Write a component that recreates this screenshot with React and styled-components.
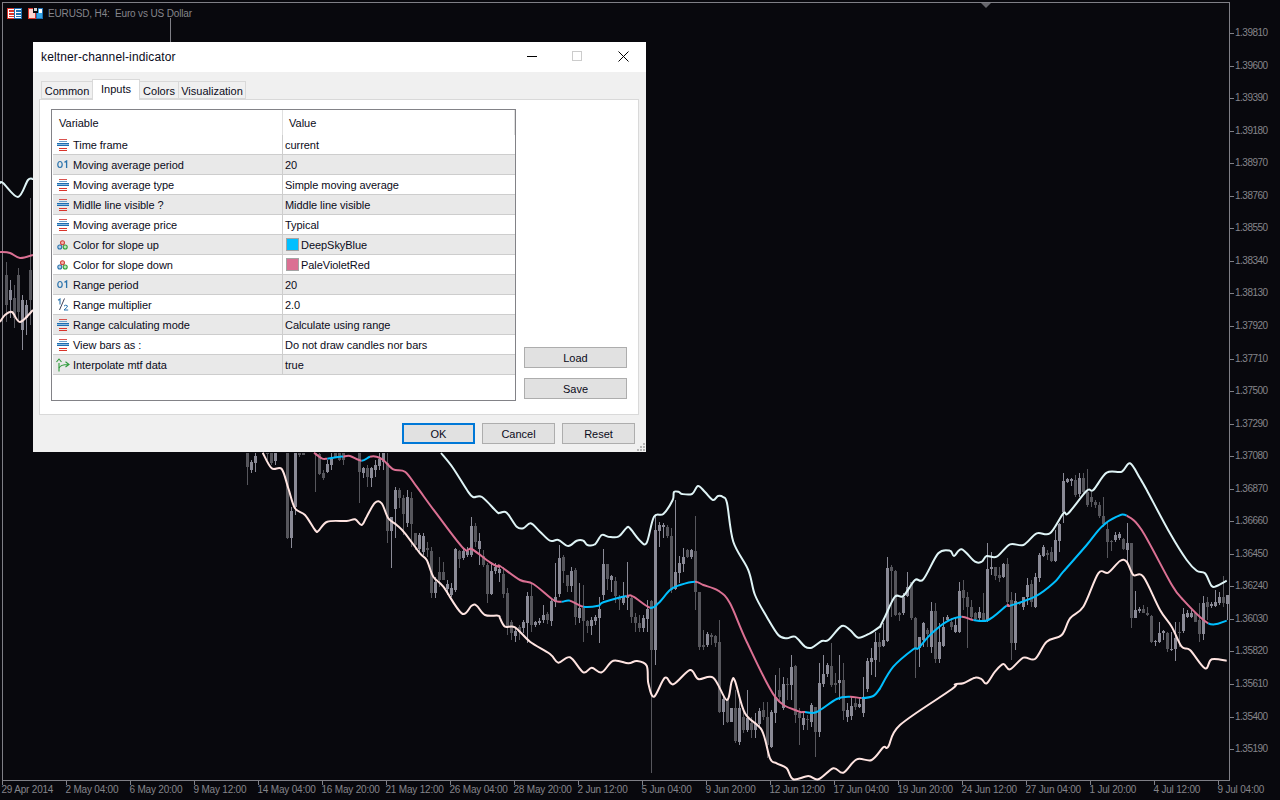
import React from "react";
import styled, { createGlobalStyle } from "styled-components";

const GlobalStyle = createGlobalStyle`
  * { box-sizing: border-box; }
  html, body { margin: 0; padding: 0; background: #08080d; }
  body { font-family: "Liberation Sans", sans-serif; overflow: hidden; }
`;

const zoom = (ox, oy, pts) => pts.map(([x, y]) => [ox + x / 3, oy + y / 3]);
const Z9 = (pts) => zoom(240, 450, pts);
const Z11 = (pts) => zoom(500, 500, pts);
const Z12 = (pts) => zoom(880, 450, pts);

const upperLine = [
  [441, 453], [453, 468], [467, 490], [473, 497], [482, 497], [497, 512],
  ...Z11([[0, 38], [20, 38], [50, 80], [70, 85], [92, 70], [120, 95], [150, 122], [175, 120], [205, 138], [230, 122], [250, 122], [262, 135], [285, 133], [305, 105], [325, 110], [355, 110], [380, 83], [390, 85], [420, 122], [440, 128], [462, 50], [490, 42], [518, 0]]),
  [674, 492], [679, 492], [682, 494], [692, 494], [698, 486], [705, 492], [713, 500], [718, 496], [723, 497], [727, 503],
  ...Z11([[700, 125], [745, 210], [765, 285], [800, 350], [835, 405], [860, 415], [885, 410], [915, 440], [935, 443], [965, 423], [985, 420], [1025, 378], [1050, 390], [1075, 413], [1110, 400], [1140, 380]]),
  ...Z12([[0, 530], [15, 500], [45, 440], [70, 438], [105, 390], [130, 388], [175, 310], [210, 302], [222, 318], [245, 298], [285, 335], [305, 335], [320, 318], [350, 320], [390, 283], [430, 285], [470, 250], [510, 250], [550, 190], [565, 190], [620, 122], [640, 120], [680, 68], [725, 65], [750, 40], [780, 85], [800, 120], [870, 250], [920, 330], [950, 362], [975, 370], [995, 408], [1010, 408], [1040, 392]]),
];

const lowerLine = [
  ...Z9([[68, 8], [95, 55], [125, 57], [145, 115], [165, 175], [195, 195], [225, 240], [235, 243], [262, 215], [320, 213], [345, 208], [365, 225], [380, 200], [405, 158], [425, 160], [445, 205], [470, 225], [495, 250], [540, 310], [560, 330], [580, 380], [610, 410], [665, 490], [695, 467], [710, 467], [735, 495], [775, 497]]),
  ...Z11([[0, 355], [15, 380], [45, 382], [90, 425], [150, 462], [175, 488], [210, 472], [250, 517], [275, 503], [305, 517], [340, 482], [385, 490], [410, 483], [440, 497], [445, 550], [462, 590], [495, 533], [520, 553], [570, 510], [595, 537], [640, 533], [680, 600], [695, 545], [705, 543], [735, 640], [785, 690], [810, 775], [830, 790], [860, 805], [880, 838], [925, 828], [955, 838], [1000, 805], [1030, 818], [1070, 778], [1115, 780], [1150, 742], [1165, 740], [1200, 675]]),
  ...Z12([[215, 718], [225, 703], [250, 700], [285, 683], [305, 688], [320, 700], [345, 665], [370, 642], [390, 658], [430, 623], [465, 627], [500, 575], [545, 555], [570, 505], [610, 470], [655, 370], [685, 368], [720, 333], [740, 335], [760, 375], [790, 380], [840, 480], [875, 530], [905, 590], [930, 600], [975, 655], [995, 628], [1040, 632]]),
];

const BLUE = "#00bfff";
const PINK = "#db7093";
const middleLine = [
  [PINK, Z9([[222, 8], [245, 25]])],
  [BLUE, Z9([[262, 26], [300, 20]])],
  [PINK, Z9([[310, 20], [330, 18]])],
  [BLUE, Z9([[365, 32]])],
  [PINK, [...Z9([[390, 20], [410, 20], [430, 30], [460, 58], [495, 65], [530, 110], [585, 185], [670, 295], [695, 297], [750, 337], [775, 350]]), ...Z11([[0, 198], [60, 240], [100, 252], [160, 300]])]],
  [BLUE, Z11([[185, 305]])],
  [PINK, Z11([[210, 302]])],
  [BLUE, Z11([[250, 320], [295, 317], [310, 307]])],
  [PINK, Z11([[380, 288], [400, 290]])],
  [BLUE, Z11([[450, 323], [475, 310], [510, 270], [540, 255]])],
  [PINK, Z11([[585, 245], [610, 255], [655, 272], [690, 310], [740, 425], [825, 590], [890, 632]])],
  [BLUE, Z11([[915, 636], [950, 636], [1010, 597]])],
  [PINK, Z11([[1050, 590]])],
  [BLUE, [...Z11([[1085, 594], [1120, 588], [1140, 565]]), ...Z12([[0, 715], [40, 650], [100, 598], [115, 595], [150, 555], [200, 515]])]],
  [PINK, Z12([[245, 500]])],
  [BLUE, Z12([[280, 510], [325, 510]])],
  [PINK, Z12([[380, 467]])],
  [BLUE, Z12([[390, 467], [465, 440], [520, 400], [550, 365], [620, 285], [665, 230], [710, 200]])],
  [PINK, Z12([[740, 197], [785, 240], [870, 395], [905, 445]])],
  [BLUE, Z12([[985, 520], [1040, 512]])],
];

// x, high, body top, body bottom, low, light
const candlesZ9 = [
  [20, 8, 10, 50, 105, 0], [32, 30, 35, 60, 68, 1], [44, 10, 18, 38, 65, 1], [80, 8, 8, 12, 30, 0], [92, 8, 8, 38, 45, 0], [104, 8, 8, 32, 45, 1],
  [140, 8, 8, 265, 268, 0], [152, 170, 183, 263, 293, 1], [164, 8, 8, 170, 195, 1], [176, 8, 8, 15, 20, 0], [188, 8, 8, 15, 15, 0],
  [224, 8, 8, 10, 125, 0], [236, 10, 12, 72, 75, 0], [248, 60, 70, 85, 90, 0], [260, 30, 42, 65, 70, 1], [272, 10, 28, 45, 60, 1], [284, 8, 8, 25, 25, 0], [296, 8, 8, 30, 32, 0], [308, 8, 8, 30, 45, 0],
  [356, 8, 8, 65, 158, 0], [368, 50, 55, 68, 85, 1], [380, 45, 55, 80, 112, 0], [392, 50, 55, 85, 110, 1], [404, 30, 45, 60, 80, 1], [416, 10, 28, 48, 60, 1], [428, 8, 8, 35, 60, 1],
  [440, 8, 38, 242, 278, 0], [452, 200, 202, 242, 355, 1], [464, 112, 120, 178, 265, 1], [476, 115, 120, 145, 175, 0], [488, 135, 145, 192, 255, 0], [500, 120, 142, 218, 230, 1], [512, 125, 145, 222, 290, 0],
  [524, 250, 250, 285, 300, 0], [536, 250, 255, 298, 305, 1], [548, 250, 258, 305, 315, 1], [560, 275, 295, 300, 320, 0], [572, 290, 303, 430, 445, 0], [584, 380, 395, 430, 445, 1], [596, 320, 365, 390, 410, 0], [608, 335, 365, 390, 390, 0],
  [620, 390, 403, 418, 435, 1], [632, 400, 415, 435, 440, 1], [644, 295, 297, 420, 425, 1], [656, 300, 302, 327, 355, 0], [668, 295, 303, 325, 330, 1], [680, 290, 302, 315, 320, 1], [692, 200, 228, 315, 320, 1], [704, 220, 228, 275, 290, 0],
  [716, 250, 272, 298, 345, 1], [728, 300, 318, 345, 350, 0], [740, 340, 345, 432, 460, 0], [752, 335, 362, 432, 435, 1], [764, 340, 352, 362, 372, 1], [776, 345, 358, 370, 395, 1],
];

const candlesZ11 = [
  [8, 200, 222, 282, 295, 0], [20, 265, 280, 380, 405, 0], [32, 360, 365, 400, 420, 0], [44, 385, 392, 408, 425, 1], [56, 375, 382, 395, 420, 0], [68, 360, 367, 385, 400, 1], [80, 275, 288, 368, 430, 1], [92, 250, 288, 375, 395, 0], [104, 362, 367, 375, 380, 1], [116, 355, 362, 370, 375, 1], [128, 315, 345, 360, 370, 1], [140, 335, 342, 360, 372, 0], [152, 295, 303, 362, 378, 1], [164, 190, 290, 305, 320, 1], [176, 135, 175, 283, 290, 1], [188, 165, 170, 212, 250, 0],
  [200, 225, 225, 258, 275, 0], [212, 200, 212, 258, 275, 1], [224, 205, 210, 352, 375, 0], [236, 250, 325, 355, 370, 1], [248, 255, 325, 362, 425, 0], [260, 360, 362, 378, 400, 0], [272, 350, 360, 378, 405, 1], [284, 345, 352, 362, 375, 1], [296, 290, 328, 355, 430, 1], [308, 148, 192, 285, 300, 1], [320, 192, 192, 238, 270, 0], [332, 225, 228, 240, 275, 1], [344, 232, 243, 288, 310, 0], [356, 285, 290, 300, 330, 0], [368, 245, 290, 308, 315, 1], [380, 185, 288, 295, 330, 1], [392, 290, 295, 352, 368, 0],
  [404, 340, 350, 370, 395, 0], [416, 345, 370, 385, 395, 0], [428, 345, 353, 385, 395, 1], [440, 300, 327, 357, 395, 1], [452, 300, 303, 450, 820, 0], [464, 45, 90, 450, 495, 1], [476, 65, 75, 92, 142, 1], [488, 70, 75, 82, 115, 1], [500, 75, 80, 108, 115, 0], [512, 85, 108, 270, 280, 0], [524, 0, 215, 268, 270, 1], [536, 168, 190, 218, 250, 1], [548, 145, 172, 192, 215, 1], [560, 148, 150, 172, 175, 0], [572, 148, 150, 172, 178, 1], [584, 48, 153, 275, 330, 0],
  [596, 275, 275, 440, 450, 0], [608, 390, 435, 442, 450, 0], [620, 395, 402, 435, 440, 1], [632, 400, 405, 412, 435, 0], [644, 405, 408, 430, 440, 0], [656, 360, 427, 635, 640, 0], [668, 590, 597, 635, 675, 1], [680, 595, 600, 665, 670, 0], [692, 625, 625, 665, 665, 1], [704, 570, 625, 722, 730, 0], [716, 595, 625, 725, 735, 1], [728, 630, 650, 690, 700, 0], [740, 570, 655, 690, 695, 1], [752, 650, 670, 690, 715, 0], [764, 640, 672, 690, 715, 1], [776, 625, 633, 672, 680, 1], [788, 605, 630, 650, 660, 0], [800, 605, 650, 735, 775, 0], [812, 630, 635, 740, 745, 1],
  [824, 525, 590, 640, 670, 1], [836, 505, 570, 590, 610, 0], [848, 530, 552, 625, 630, 1], [860, 535, 552, 555, 600, 0], [872, 465, 502, 555, 600, 1], [884, 495, 497, 645, 670, 0], [896, 625, 640, 655, 735, 0], [908, 640, 653, 675, 690, 1], [920, 645, 658, 660, 690, 0], [932, 610, 615, 665, 680, 1], [944, 620, 620, 695, 770, 0], [956, 490, 548, 695, 710, 1], [968, 465, 522, 552, 560, 1], [980, 490, 495, 522, 530, 1], [992, 430, 498, 555, 560, 0], [1004, 520, 548, 555, 580, 0], [1016, 465, 540, 548, 600, 1], [1028, 490, 540, 632, 660, 0], [1040, 610, 630, 650, 665, 1], [1052, 590, 618, 648, 660, 1], [1064, 590, 610, 620, 630, 0], [1076, 590, 612, 622, 625, 1], [1088, 530, 590, 640, 650, 1], [1100, 475, 482, 568, 575, 1], [1112, 445, 475, 485, 525, 1], [1124, 395, 427, 480, 530, 1], [1136, 400, 427, 440, 485, 0], [1148, 370, 420, 438, 440, 1],
];

const candlesZ12 = [
  [8, 570, 570, 588, 590, 1], [20, 320, 355, 572, 575, 1], [32, 345, 352, 362, 500, 0], [44, 360, 362, 495, 497, 0], [56, 485, 490, 495, 512, 0], [68, 430, 440, 490, 495, 1], [80, 365, 410, 437, 440, 1], [92, 395, 395, 505, 510, 0], [104, 500, 505, 595, 685, 0], [116, 560, 562, 595, 650, 1], [128, 515, 518, 570, 590, 1], [140, 535, 540, 552, 590, 0], [152, 455, 483, 590, 610, 1], [164, 460, 483, 628, 640, 0], [176, 520, 575, 628, 640, 1], [188, 500, 530, 588, 590, 1], [200, 495, 500, 510, 515, 1], [212, 505, 515, 530, 540, 0], [224, 505, 525, 545, 550, 1], [236, 395, 423, 545, 548, 1], [248, 390, 420, 445, 480, 0], [260, 425, 442, 472, 595, 0], [272, 450, 472, 500, 510, 0], [284, 485, 490, 508, 510, 0], [296, 470, 485, 505, 510, 1], [308, 430, 490, 510, 515, 0],
  [320, 280, 358, 510, 515, 1], [332, 305, 350, 358, 375, 1], [344, 350, 350, 378, 390, 0], [356, 350, 375, 385, 395, 0], [368, 340, 343, 382, 385, 1], [380, 325, 343, 455, 465, 0], [392, 425, 450, 578, 630, 0], [404, 430, 452, 578, 600, 1], [416, 455, 458, 460, 465, 0], [428, 440, 442, 470, 480, 1], [440, 385, 405, 442, 465, 1], [452, 390, 403, 455, 470, 0], [464, 370, 380, 470, 475, 1], [476, 310, 315, 385, 395, 1], [488, 285, 292, 318, 320, 1], [500, 300, 308, 315, 330, 0], [512, 290, 305, 333, 335, 0], [524, 240, 270, 332, 335, 1], [536, 220, 222, 273, 305, 1], [548, 68, 93, 185, 220, 1], [560, 85, 88, 95, 98, 1], [572, 85, 88, 92, 108, 1], [584, 75, 90, 135, 140, 0], [596, 70, 85, 132, 140, 1], [608, 68, 85, 125, 135, 0],
  [620, 58, 125, 165, 170, 0], [632, 125, 140, 155, 170, 0], [644, 150, 155, 165, 175, 0], [656, 155, 165, 197, 205, 0], [668, 140, 197, 222, 230, 0], [680, 215, 238, 275, 323, 0], [692, 270, 272, 275, 303, 0], [704, 245, 255, 270, 275, 1], [716, 245, 252, 265, 270, 1], [728, 265, 268, 298, 300, 0], [740, 220, 278, 300, 340, 1], [752, 278, 278, 505, 535, 0], [764, 422, 480, 503, 505, 1], [776, 470, 477, 482, 490, 1], [788, 465, 477, 488, 490, 0], [800, 470, 488, 495, 497, 0], [812, 495, 497, 575, 580, 0], [824, 570, 572, 575, 588, 1], [836, 515, 550, 575, 580, 1], [848, 540, 542, 548, 570, 1], [860, 545, 548, 598, 605, 0], [872, 545, 597, 600, 602, 1], [884, 515, 565, 598, 632, 1], [896, 515, 545, 550, 590, 0], [908, 475, 492, 542, 550, 1], [920, 480, 488, 500, 505, 1], [932, 480, 488, 500, 503, 1], [944, 490, 490, 515, 515, 0], [956, 460, 510, 552, 575, 0], [968, 438, 460, 552, 570, 1], [980, 440, 457, 470, 510, 0], [992, 455, 462, 468, 475, 1], [1004, 420, 455, 468, 472, 1], [1016, 425, 442, 458, 465, 1], [1028, 378, 440, 458, 470, 0], [1040, 435, 436, 462, 510, 1],
];

const candlesLeft = [
  [6, 262, 275, 305, 322, 0], [10, 280, 290, 300, 318, 1], [14, 285, 298, 318, 328, 0], [18, 268, 275, 312, 322, 0], [22, 295, 300, 330, 350, 1], [26, 300, 305, 318, 335, 1], [30, 198, 270, 300, 325, 0],
];

const toCandles = (ox, oy, list) =>
  list.map(([x, hi, top, bot, lo, light]) => ({
    x: Math.round(ox + x / 3),
    hi: Math.round(oy + hi / 3),
    top: Math.round(oy + top / 3),
    bot: Math.round(oy + bot / 3),
    lo: Math.round(oy + lo / 3),
    light,
  }));

const candles = [
  ...toCandles(240, 450, candlesZ9),
  ...toCandles(500, 500, candlesZ11),
  ...toCandles(880, 450, candlesZ12),
  ...toCandles(0, 0, candlesLeft.map(([x, a, b, c, d, l]) => [x * 3, a * 3, b * 3, c * 3, d * 3, l])),
];

// catmull-rom through the traced points, so the bands don't look polygonal
const smoothSegment = (pts, from, to) => {
  const p = (i) => pts[Math.max(0, Math.min(pts.length - 1, i))];
  let d = `M${p(from)[0].toFixed(1)} ${p(from)[1].toFixed(1)}`;
  for (let i = from; i < to; i++) {
    const [p0, p1, p2, p3] = [p(i - 1), p(i), p(i + 1), p(i + 2)];
    const c1 = [p1[0] + (p2[0] - p0[0]) / 6, p1[1] + (p2[1] - p0[1]) / 6];
    const c2 = [p2[0] - (p3[0] - p1[0]) / 6, p2[1] - (p3[1] - p1[1]) / 6];
    d += ` C${c1[0].toFixed(1)} ${c1[1].toFixed(1)} ${c2[0].toFixed(1)} ${c2[1].toFixed(1)} ${p2[0].toFixed(1)} ${p2[1].toFixed(1)}`;
  }
  return d;
};
const smooth = (pts) => smoothSegment(pts, 0, pts.length - 1);

// middle line: one curve through every run, each run coloured up to the next run's first point
const middleAll = middleLine.flatMap(([, pts]) => pts);
let middleCursor = 0;
const middleRuns = middleLine.map(([color, pts]) => {
  const from = middleCursor;
  middleCursor += pts.length;
  return { color, d: smoothSegment(middleAll, from, Math.min(middleCursor, middleAll.length - 1)) };
});

const prices = ["1.39810", "1.39600", "1.39390", "1.39180", "1.38970", "1.38760", "1.38550", "1.38340", "1.38130", "1.37920", "1.37710", "1.37500", "1.37290", "1.37080", "1.36870", "1.36660", "1.36450", "1.36240", "1.36030", "1.35820", "1.35610", "1.35400", "1.35190"];
const dates = ["29 Apr 2014", "2 May 04:00", "6 May 20:00", "9 May 12:00", "14 May 04:00", "16 May 20:00", "21 May 12:00", "26 May 04:00", "28 May 20:00", "2 Jun 12:00", "5 Jun 04:00", "9 Jun 20:00", "12 Jun 12:00", "17 Jun 04:00", "19 Jun 20:00", "24 Jun 12:00", "27 Jun 04:00", "1 Jul 20:00", "4 Jul 12:00", "9 Jul 04:00"];

const AXIS = "#7f7f86";

const Terminal = styled.div`
  position: relative;
  width: 1280px;
  height: 800px;
  overflow: hidden;
  background: #08080d;
`;

const ChartSvg = styled.svg`
  position: absolute;
  left: 0;
  top: 0;
`;

const ChartHeading = styled.div`
  position: absolute;
  left: 48px;
  top: 7px;
  font: 10px/14px "Liberation Sans", sans-serif;
  letter-spacing: -0.15px;
  color: #85858b;
  white-space: pre;
`;

const PriceLabel = styled.span`
  position: absolute;
  left: 1235px;
  top: ${(p) => p.$y - 7}px;
  font: 10px/14px "Liberation Sans", sans-serif;
  letter-spacing: -0.5px;
  color: #85858b;
`;

const DateLabel = styled.span`
  position: absolute;
  left: ${(p) => p.$x - 0.5}px;
  top: 783px;
  font: 10px/14px "Liberation Sans", sans-serif;
  letter-spacing: -0.2px;
  color: #85858b;
  white-space: nowrap;
`;

const Dialog = styled.div`
  position: absolute;
  left: 33px;
  top: 42px;
  width: 613px;
  height: 410px;
  background: #f0f0f0;
  color: #0b0b20;
  font-size: 11px;
`;

const TitleBar = styled.div`
  position: relative;
  height: 30px;
  background: #fff;
  font-size: 12px;
  line-height: 30px;
  padding-left: 8px;
  letter-spacing: 0.13px;
`;

const WindowIcon = styled.svg`
  position: absolute;
  top: 9px;
  left: ${(p) => p.$x}px;
`;

const TabStrip = styled.div`
  display: flex;
  align-items: flex-end;
  height: 27px;
  padding-left: 9px;
`;

const Tab = styled.div`
  height: ${(p) => (p.$active ? 21 : 18)}px;
  width: ${(p) => p.$w}px;
  margin-left: -1px;
  margin-bottom: ${(p) => (p.$active ? -1 : 0)}px;
  position: relative;
  z-index: ${(p) => (p.$active ? 2 : 1)};
  border: 1px solid #d9d9d9;
  border-bottom: ${(p) => (p.$active ? "none" : "1px solid #d9d9d9")};
  background: ${(p) => (p.$active ? "#fff" : "#f0f0f0")};
  text-align: center;
  line-height: ${(p) => (p.$active ? 19 : 18)}px;
`;

const Panel = styled.div`
  position: relative;
  width: 600px;
  height: 316px;
  margin-left: 6px;
  background: #fff;
  border: 1px solid #d9d9d9;
`;

const Table = styled.div`
  position: absolute;
  left: 11px;
  top: 9px;
  width: 465px;
  height: 292px;
  border: 1px solid #828287;
  padding-left: 1px;
`;

const HeaderRow = styled.div`
  position: relative;
  display: flex;
  height: 25px;
  line-height: 27px;
  &::after {
    content: "";
    position: absolute;
    right: 0;
    top: 0;
    height: 25px;
    border-right: 1px solid #e0e0e0;
  }
`;

const HeaderCell = styled.div`
  width: ${(p) => p.$w}px;
  padding-left: ${(p) => p.$pad}px;
  border-right: ${(p) => (p.$divided ? "1px solid #e0e0e0" : "none")};
`;

const Row = styled.div`
  display: flex;
  width: 462px;
  height: 20px;
  line-height: 21px;
  background: ${(p) => (p.$alt ? "#e9e9e9" : "#fff")};
  border-bottom: 1px solid #cdcdcd;
`;

const NameCell = styled.div`
  display: flex;
  width: 230px;
  border-right: 1px solid #cdcdcd;
  letter-spacing: -0.05px;
`;

const IconSlot = styled.span`
  display: flex;
  justify-content: center;
  align-items: center;
  width: 20px;
  padding-right: 1px;
  height: 19px;
  flex: none;
`;

const ValueCell = styled.div`
  display: flex;
  padding-left: 2px;
  letter-spacing: -0.05px;
`;

const Swatch = styled.span`
  width: 13px;
  height: 13px;
  margin: 3px 2px 0 1px;
  background: ${(p) => p.$color};
  border: 1px solid #a3a3a3;
`;

const DialogButton = styled.div`
  width: ${(p) => p.$w}px;
  height: 21px;
  background: #e1e1e1;
  border: ${(p) => (p.$primary ? "2px solid #0078d7" : "1px solid #adadad")};
  text-align: center;
  line-height: ${(p) => (p.$primary ? 19 : 21)}px;
`;

const SideButtons = styled.div`
  position: absolute;
  left: 484px;
  top: 247px;
  display: flex;
  flex-direction: column;
  gap: 10px;
`;

const Footer = styled.div`
  position: relative;
  display: flex;
  gap: 7px;
  padding: 8px 0 0 369px;
`;

const Grip = styled.svg`
  position: absolute;
  right: 1px;
  bottom: 1px;
`;

const EnumIcon = () => (
  <svg width="12" height="12" viewBox="0 0 12 12">
    <g shapeRendering="crispEdges">
      <rect x="2" y="0" width="8" height="1" fill="#d9534f" />
      <rect x="2" y="2" width="8" height="1" fill="#6f9fc8" />
      <rect x="0" y="4" width="12" height="3" fill="#8db8dc" />
      <rect x="0" y="4" width="12" height="1" fill="#1f6fb2" />
      <rect x="0" y="6" width="12" height="1" fill="#1f6fb2" />
      <rect x="2" y="9" width="8" height="1" fill="#d9342b" />
      <rect x="2" y="11" width="8" height="1" fill="#d9342b" />
    </g>
  </svg>
);

const IntIcon = () => (
  <svg width="12" height="9" viewBox="0 0 12 9">
    <ellipse cx="3" cy="4.5" rx="2.2" ry="3" fill="none" stroke="#2a73ad" strokeWidth="1.2" />
    <path d="M7.5 2.4 L9.6 1 V8" fill="none" stroke="#2a73ad" strokeWidth="1.3" />
  </svg>
);

const ColorIcon = () => (
  <svg width="11" height="10" viewBox="0 0 11 10">
    <circle cx="5.5" cy="2.8" r="2" fill="#f3b5b0" stroke="#d2453c" strokeWidth="1.1" />
    <circle cx="2.8" cy="7" r="2" fill="#b5cfe8" stroke="#2a73ad" strokeWidth="1.1" />
    <circle cx="8.2" cy="7" r="2" fill="#bfe6bf" stroke="#35a03a" strokeWidth="1.1" />
  </svg>
);

const FractionIcon = () => (
  <svg width="12" height="13" viewBox="0 0 12 13">
    <path d="M1 2.2 L3 1 V6.5" fill="none" stroke="#2a73ad" strokeWidth="1.1" />
    <path d="M7.5 0.5 L2.5 12" fill="none" stroke="#3f3f55" strokeWidth="1" />
    <path d="M7 8 Q8.5 6.6 10.2 7.6 Q11 9 9 10.2 L7 12 H11.2" fill="none" stroke="#2a73ad" strokeWidth="1" />
  </svg>
);

const BoolIcon = () => (
  <svg width="14" height="14" viewBox="0 0 14 14">
    <path d="M3 13.5 V5 M0.5 4 L3 1 L5.5 4" fill="none" stroke="#2e9b3b" strokeWidth="1.1" />
    <path d="M3 10 Q4.5 6.5 12 6.5 M9.5 3.8 L13 6.5 L9.5 9" fill="none" stroke="#2e9b3b" strokeWidth="1.1" />
  </svg>
);

const icons = { enum: EnumIcon, int: IntIcon, color: ColorIcon, frac: FractionIcon, bool: BoolIcon };

const rows = [
  ["enum", "Time frame", "current"],
  ["int", "Moving average period", "20"],
  ["enum", "Moving average type", "Simple moving average"],
  ["enum", "Midlle line visible ?", "Middle line visible"],
  ["enum", "Moving average price", "Typical"],
  ["color", "Color for slope up", "DeepSkyBlue", "#00bfff"],
  ["color", "Color for slope down", "PaleVioletRed", "#db7093"],
  ["int", "Range period", "20"],
  ["frac", "Range multiplier", "2.0"],
  ["enum", "Range calculating mode", "Calculate using range"],
  ["enum", "View bars as :", "Do not draw candles nor bars"],
  ["bool", "Interpolate mtf data", "true"],
];

const tabs = [["Common", 52], ["Inputs", 48, true], ["Colors", 40], ["Visualization", 68]];

const Chart = () => (
  <ChartSvg width="1280" height="800" viewBox="0 0 1280 800">
    <g shapeRendering="crispEdges">
      <rect x="2" y="2" width="1227" height="1" fill={AXIS} />
      <rect x="2" y="2" width="1" height="778" fill={AXIS} />
      <rect x="1229" y="2" width="1" height="779" fill={AXIS} />
      <rect x="2" y="780" width="1228" height="1" fill={AXIS} />
      {prices.map((p, i) => (
        <rect key={p} x="1229" y={Math.round(33 + i * 32.55)} width="5" height="1" fill={AXIS} />
      ))}
      {dates.map((d, i) => (
        <rect key={d} x={2 + i * 64} y="780" width="1" height="5" fill={AXIS} />
      ))}
      <rect x="170" y="18" width="1" height="24" fill={AXIS} />
      {candles.map((c, i) => (
        <g key={i} fill={c.light ? "#8a8a96" : "#56565c"}>
          <rect x={c.x} y={c.hi} width="1" height={Math.max(c.lo - c.hi, 1)} />
          <rect x={c.x - 1} y={c.top} width="3" height={Math.max(c.bot - c.top, 1)} />
        </g>
      ))}
    </g>
    <path d="M981 3 H991 L986 8 Z" fill="#66666c" />
    <g fill="none" strokeWidth="2" strokeLinejoin="round">
      <path d={smooth(upperLine)} stroke="#dff4f6" />
      <path d={smooth([[0, 183], [3, 183], [18, 197], [28, 180], [33, 179]])} stroke="#dff4f6" />
      <path d={smooth(lowerLine)} stroke="#ffe4e1" />
      <path d={smooth([[0, 322], [5, 315], [12, 312], [20, 322], [33, 310]])} stroke="#ffe4e1" />
      <path d={smooth([[0, 252], [10, 253], [20, 258], [33, 255]])} stroke={PINK} />
      {middleRuns.map((run, i) => (
        <path key={i} d={run.d} stroke={run.color} />
      ))}
    </g>
    {/* symbol badges */}
    <g shapeRendering="crispEdges">
      <rect x="7.5" y="8.5" width="7" height="10" fill="#fff" stroke="#d9342b" />
      <rect x="14.5" y="8.5" width="7" height="10" fill="#fff" stroke="#1f6fb2" />
      <rect x="9" y="10" width="5" height="2" fill="#d9342b" />
      <rect x="9" y="13" width="5" height="2" fill="#d9342b" />
      <rect x="9" y="16" width="5" height="1" fill="#d9342b" />
      <rect x="16" y="10" width="5" height="2" fill="#1f6fb2" />
      <rect x="16" y="13" width="5" height="2" fill="#1f6fb2" />
      <rect x="16" y="16" width="5" height="1" fill="#1f6fb2" />
      <rect x="28.5" y="8.5" width="7" height="10" fill="#fbd5d1" stroke="#d9342b" />
      <rect x="36.5" y="8.5" width="6" height="10" fill="#35a6e8" stroke="#1f6fb2" />
      <rect x="33" y="8" width="5" height="5" fill="#08080d" />
      <rect x="34" y="8" width="3" height="3" fill="#d0d0d0" />
      <rect x="39" y="9" width="3" height="4" fill="#fff" />
    </g>
  </ChartSvg>
);

export default function App() {
  return (
    <Terminal>
      <GlobalStyle />
      <Chart />
      <ChartHeading>EURUSD, H4:  Euro vs US Dollar</ChartHeading>
      {prices.map((p, i) => (
        <PriceLabel key={p} $y={33 + i * 32.55}>{p}</PriceLabel>
      ))}
      {dates.map((d, i) => (
        <DateLabel key={d} $x={2 + i * 64}>{d}</DateLabel>
      ))}
      <Dialog>
        <TitleBar>
          keltner-channel-indicator
          <WindowIcon $x={494} width="10" height="11" viewBox="0 0 10 11">
            <rect x="0" y="5" width="10" height="1" fill="#000" />
          </WindowIcon>
          <WindowIcon $x={539} width="10" height="11" viewBox="0 0 10 11">
            <rect x="0.5" y="0.5" width="9" height="9" fill="none" stroke="#cccccc" />
          </WindowIcon>
          <WindowIcon $x={585} width="11" height="11" viewBox="0 0 11 11">
            <path d="M0.5 0.5 L10.5 10.5 M10.5 0.5 L0.5 10.5" stroke="#000" strokeWidth="1" />
          </WindowIcon>
        </TitleBar>
        <TabStrip>
          {tabs.map(([label, w, active]) => (
            <Tab key={label} $w={w} $active={active}>{label}</Tab>
          ))}
        </TabStrip>
        <Panel>
          <Table>
            <HeaderRow>
              <HeaderCell $w={230} $pad={6} $divided>Variable</HeaderCell>
              <HeaderCell $w={200} $pad={6}>Value</HeaderCell>
            </HeaderRow>
            {rows.map(([icon, name, value, swatch], i) => {
              const Icon = icons[icon];
              return (
                <Row key={name} $alt={i % 2 === 1}>
                  <NameCell>
                    <IconSlot><Icon /></IconSlot>
                    {name}
                  </NameCell>
                  <ValueCell>
                    {swatch && <Swatch $color={swatch} />}
                    {value}
                  </ValueCell>
                </Row>
              );
            })}
          </Table>
          <SideButtons>
            <DialogButton $w={103}>Load</DialogButton>
            <DialogButton $w={103}>Save</DialogButton>
          </SideButtons>
        </Panel>
        <Footer>
          <DialogButton $w={73} $primary>OK</DialogButton>
          <DialogButton $w={73}>Cancel</DialogButton>
          <DialogButton $w={73}>Reset</DialogButton>
        </Footer>
        <Grip width="8" height="8" viewBox="0 0 8 8">
          <g fill="#b5b5b5" shapeRendering="crispEdges">
            <rect x="6" y="0" width="2" height="2" />
            <rect x="3" y="3" width="2" height="2" />
            <rect x="6" y="3" width="2" height="2" />
            <rect x="0" y="6" width="2" height="2" />
            <rect x="3" y="6" width="2" height="2" />
            <rect x="6" y="6" width="2" height="2" />
          </g>
        </Grip>
      </Dialog>
    </Terminal>
  );
}
